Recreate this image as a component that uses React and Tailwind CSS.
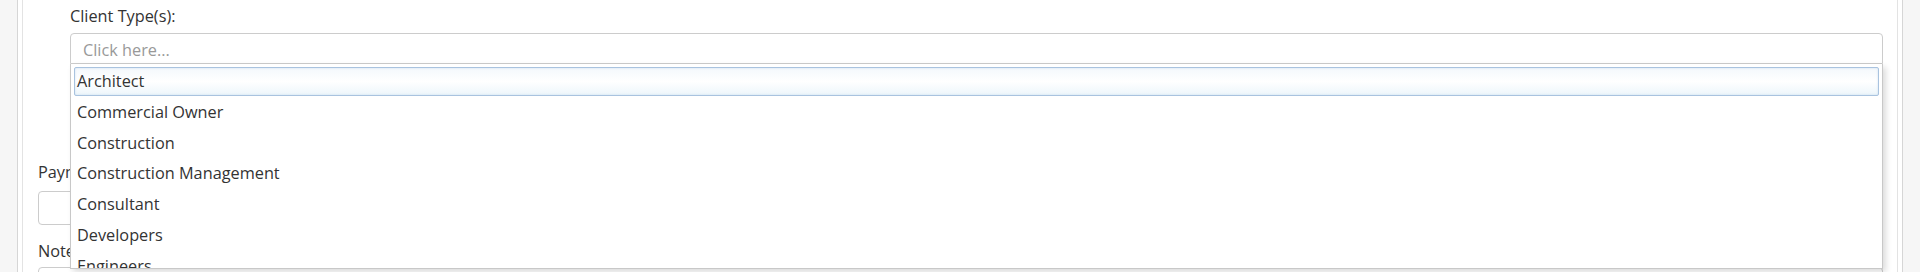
import React from 'react'

const clientTypes = [
  'Architect',
  'Commercial Owner',
  'Construction',
  'Construction Management',
  'Consultant',
  'Developers',
  'Engineers',
]

export default function App() {
  return (
    <div
      className="h-[272px] overflow-hidden bg-[#f6f6f6] px-[17px] text-[16.3px] leading-[22px] text-[#333]"
      style={{ fontFamily: '"Open Sans", "Noto Sans", sans-serif' }}
    >
      <div className="h-full border-x border-[#d6d6d6] bg-white px-[4px]">
        <div className="h-full border-x border-[#e3e3e3] pl-[15px] pr-[14px]">
          {/* client types */}
          <div className="relative z-10 pl-[32px] pt-[5px]">
            <div className="mb-[6px]">Client Type(s):</div>
            <div className="relative">
              <div className="h-[31px] rounded-t-[4px] border border-[#cccccc] bg-white px-[12px] pt-[5px] text-[#999]">
                Click here...
              </div>
              <div className="absolute left-0 right-0 top-full h-[205px] overflow-hidden border-x border-b border-[#c8c8c8] bg-white pt-[3px] shadow-[3px_3px_6px_rgba(0,0,0,0.14)]">
                {clientTypes.map((t, i) => (
                  <div
                    key={t}
                    className={`mx-[3px] mb-[1.8px] h-[29px] rounded-[2px] border px-[2px] pt-[2px] ${
                      i === 0
                        ? 'border-[#a9c3df] bg-gradient-to-b from-[#f4f8fc] via-white to-[#edf6fb] shadow-[inset_0_0_2px_rgba(160,190,225,0.5)]'
                        : 'border-transparent'
                    }`}
                  >
                    {t}
                  </div>
                ))}
              </div>
            </div>
          </div>

          {/* payment */}
          <div className="mt-[97px]">
            <div className="mb-[8px]">Payment Terms:</div>
            <div className="h-[34px] rounded-[4px] border border-[#cccccc]"></div>
          </div>

          {/* notes */}
          <div className="mt-[15px]">
            <div className="mb-[5px]">Notes:</div>
            <div className="h-[80px] rounded-[4px] border border-[#cccccc]"></div>
          </div>
        </div>
      </div>
    </div>
  )
}
